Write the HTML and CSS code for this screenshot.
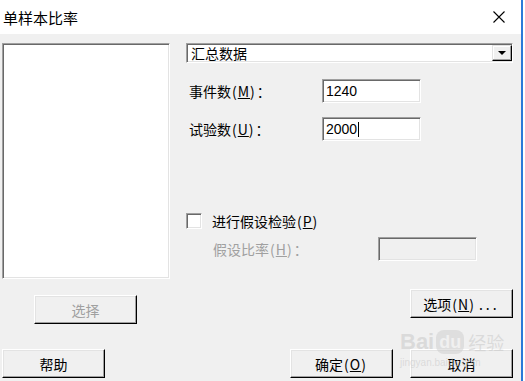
FILE: index.html
```html
<!DOCTYPE html>
<html lang="zh-CN">
<head>
  <meta charset="UTF-8">
  <title>单样本比率</title>
  <link rel="stylesheet" href="styles.css">
</head>
<body>
  <div class="window">
    <div class="titlebar">
      <span class="title">单样本比率</span>
      <svg class="close" width="12" height="12" viewBox="0 0 12 12">
        <path d="M0.5 0.5 L11.5 11.5 M11.5 0.5 L0.5 11.5" stroke="#000" stroke-width="1.1" fill="none"/>
      </svg>
    </div>

    <div class="main">
      <div class="left">
        <div class="listbox"></div>
        <button class="btn btn-select" disabled>选择</button>
      </div>

      <div class="right">
        <div class="combo">
          <span>汇总数据</span>
          <span class="combo-arrow"><span class="tri"></span></span>
        </div>

        <div class="field field-first">
          <label>事件数<span class="acc">(<u>M</u>)</span>：</label>
          <div class="textbox">1240</div>
        </div>
        <div class="field">
          <label>试验数<span class="acc">(<u>U</u>)</span>：</label>
          <div class="textbox">2000<span class="caret"></span></div>
        </div>

        <div class="check-row">
          <span class="checkbox"></span>
          <span>进行假设检验<span class="acc">(<u>P</u>)</span></span>
        </div>
        <div class="field hyp">
          <label>假设比率<span class="acc">(<u>H</u>)</span>：</label>
          <div class="textbox textbox-off"></div>
        </div>

        <button class="btn btn-options">选项<span class="acc">(<u>N</u>)</span><span class="dots">...</span></button>
      </div>
    </div>

    <div class="footer">
      <button class="btn">帮助</button>
      <button class="btn btn-ok">确定<span class="acc">(<u>O</u>)</span></button>
      <button class="btn btn-cancel">取消</button>
    </div>

    <div class="watermark">
      <div class="wm-logo"><b>Bai</b><span class="wm-du">du</span><span class="wm-cn">经验</span></div>
      <div class="wm-url">jingyan.baidu.com</div>
    </div>
  </div>
</body>
</html>
```

FILE: styles.css
```css
* { box-sizing: border-box; }
html { background: #fff; }
body { margin: 0; font-family: "Noto Sans CJK SC", sans-serif; font-size: 14px; color: #000; }

.window { position: relative; width: 523px; height: 381px; background: #f0f0f0; border-right: 2px solid #2b7ad8; overflow: hidden; }

.titlebar { height: 34px; background: #fff; display: flex; align-items: center; justify-content: space-between; padding: 0 16px 0 3px; }
.title { font-size: 15px; }
.close { display: block; }

.main { display: grid; grid-template-columns: 168px 327px; column-gap: 16px; padding: 9px 0 0 2px; }
.left { display: flex; flex-direction: column; }
.right { display: flex; flex-direction: column; }

.listbox, .combo, .textbox, .checkbox {
  background: #fff;
  border: 1px solid;
  border-color: #a0a0a0 #fff #fff #a0a0a0;
  box-shadow: inset 1px 1px #696969, inset -1px -1px #e3e3e3;
}
.listbox { height: 236px; }

.btn {
  width: 103px; height: 29px; padding: 0;
  background: #f0f0f0; color: #000;
  font-family: inherit; font-size: 14px;
  border: 1px solid; border-color: #fff #000 #000 #fff;
  box-shadow: inset -1px -1px #a0a0a0, inset 1px 1px #e3e3e3;
}
.btn-select { margin: 16px 0 0 32px; color: #a0a0a0; }
.btn-options { margin-top: 28px; align-self: flex-end; }
.dots { letter-spacing: 3px; margin-left: 3px; }

.acc { letter-spacing: 1px; margin: 0 1px; }

.combo { height: 20px; display: flex; align-items: center; padding-left: 4px; }
.combo-arrow {
  margin-left: auto; width: 20px; height: 16px;
  background: #f0f0f0; display: flex; align-items: center; justify-content: center;
  border: 1px solid; border-color: #e3e3e3 #000 #000 #e3e3e3;
  box-shadow: inset -1px -1px #a0a0a0, inset 1px 1px #fff;
}
.tri { width: 0; height: 0; border-left: 4px solid transparent; border-right: 4px solid transparent; border-top: 4px solid #000; }

.field { display: flex; align-items: center; height: 24px; margin-top: 14px; }
.field-first { margin-top: 16px; }
.field label { width: 136px; padding-left: 3px; }
.textbox { width: 99px; height: 24px; display: flex; align-items: center; padding-left: 3px; font-family: "Liberation Sans", Arial, sans-serif; font-size: 14px; }
.caret { width: 1px; height: 15px; background: #000; margin-left: 1px; }

.check-row { display: flex; align-items: center; gap: 10px; height: 16px; margin-top: 72px; }
.checkbox { width: 16px; height: 16px; }

.hyp { margin-top: 8px; padding-left: 27px; color: #a0a0a0; }
.hyp label { width: 165px; padding-left: 0; }
.textbox-off { background: #f0f0f0; }

.footer { display: flex; margin-top: 25px; padding-left: 2px; }
.btn-ok { margin-left: 185px; }
.btn-cancel { margin-left: 17px; }

.watermark { position: absolute; left: 400px; top: 330px; color: rgba(200, 200, 200, 0.55); pointer-events: none; }
.wm-logo { display: flex; align-items: center; font-family: "Liberation Sans", Arial, sans-serif; font-size: 22px; line-height: 24px; }
.wm-du { background: rgba(200, 200, 200, 0.45); color: #f0f0f0; border-radius: 8px; padding: 0 3px; font-size: 18px; font-weight: bold; margin-left: 2px; }
.wm-cn { font-family: "Noto Sans CJK SC", sans-serif; font-size: 18px; margin-left: 4px; }
.wm-url { font-family: "Liberation Sans", Arial, sans-serif; font-size: 10px; margin-top: 3px; }
```
